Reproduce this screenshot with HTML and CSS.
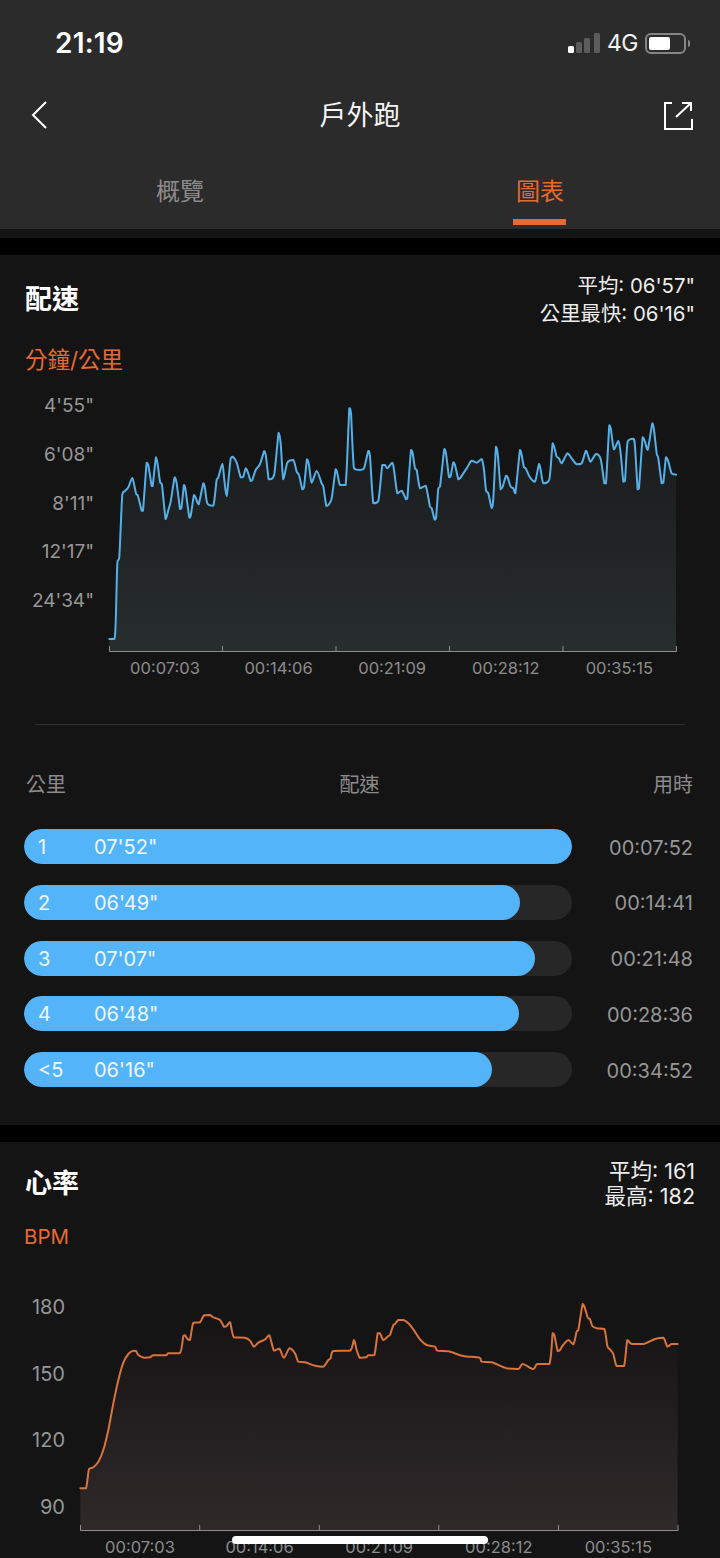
FILE: index.html
```html
<!DOCTYPE html>
<html lang="zh-Hant">
<head>
<meta charset="utf-8">
<title>戶外跑</title>
<link rel="stylesheet" href="styles.css">
</head>
<body>
<header class="header">
  <div class="status">
    <span class="clock">21:19</span>
    <div class="status-right">
      <div class="signal"><i class="sig s1"></i><i class="sig s2"></i><i class="sig s3"></i><i class="sig s4"></i></div>
      <span class="net">4G</span>
      <div class="battery"><div class="battery-fill"></div></div>
      <div class="battery-nub"></div>
    </div>
  </div>
  <nav class="nav">
    <svg class="icon" width="30" height="30" viewBox="0 0 30 30"><path class="icon-line" d="M15 2 L2 15 L15 28"/></svg>
    <h1 class="title">戶外跑</h1>
    <svg class="icon icon-end" width="30" height="30" viewBox="0 0 30 30"><path class="icon-line" d="M9 3 H2 V29 H29 V19 M13 17 L28 3 M19 3 H28 V11"/></svg>
  </nav>
  <div class="tabs">
    <div class="tab"><span class="tab-text">概覽</span></div>
    <div class="tab tab-active"><span class="tab-text">圖表</span><span class="tab-bar"></span></div>
  </div>
</header>
<div class="strip"></div>

<section class="card pace-card">
  <div class="card-head">
    <h2 class="card-title">配速</h2>
    <div class="stats"><div>平均: 06'57"</div><div>公里最快: 06'16"</div></div>
  </div>
  <div class="unit">分鐘/公里</div>
  <div class="chart">
    <div class="y-axis pace-y"><span>4'55"</span><span>6'08"</span><span>8'11"</span><span>12'17"</span><span>24'34"</span></div>
    <svg class="plot" width="570" height="261" viewBox="107 394 570 261">
      <defs><linearGradient id="paceFill" gradientUnits="userSpaceOnUse" x1="0" y1="60" x2="0" y2="785"><stop offset="0" stop-color="#18191a"/><stop offset="1" stop-color="#282d2e"/></linearGradient></defs>
      <g transform="translate(0 390) scale(.33333)">
        <polygon fill="url(#paceFill)" points="328,785 328,747 343,747 347,700 352,520 358,500 367,312 375,303 385,292 397,264 408,310 414,318 425,362 429,362 440,218 445,225 455,288 458,288 468,202 474,230 480,275 486,285 497,388 505,360 512,335 524,262 530,280 540,357 544,355 552,285 556,295 568,383 572,378 582,315 588,325 596,343 610,280 615,295 622,340 640,347 650,270 655,262 667,222 673,270 680,318 692,205 698,200 710,218 722,262 730,260 737,235 743,245 752,273 757,270 767,240 780,222 793,183 798,200 806,268 812,268 823,252 836,128 842,160 850,268 862,218 880,210 890,245 897,255 907,298 912,292 921,208 927,225 935,278 950,243 965,280 970,290 979,348 985,345 995,325 1007,238 1012,250 1020,285 1037,285 1048,55 1053,70 1062,235 1081,240 1081,785"/>
        <polyline class="line pace-line" points="328,747 343,747 347,700 352,520 358,500 367,312 375,303 385,292 397,264 408,310 414,318 425,362 429,362 440,218 445,225 455,288 458,288 468,202 474,230 480,275 486,285 497,388 505,360 512,335 524,262 530,280 540,357 544,355 552,285 556,295 568,383 572,378 582,315 588,325 596,343 610,280 615,295 622,340 640,347 650,270 655,262 667,222 673,270 680,318 692,205 698,200 710,218 722,262 730,260 737,235 743,245 752,273 757,270 767,240 780,222 793,183 798,200 806,268 812,268 823,252 836,128 842,160 850,268 862,218 880,210 890,245 897,255 907,298 912,292 921,208 927,225 935,278 950,243 965,280 970,290 979,348 985,345 995,325 1007,238 1012,250 1020,285 1037,285 1048,55 1053,70 1062,235 1080,240"/>
      </g>
      <g transform="translate(360 390) scale(.33333)">
        <polygon fill="url(#paceFill)" points="0,785 0,240 12,235 25,183 30,200 40,340 55,333 67,225 75,225 82,235 97,218 102,240 112,310 125,302 138,328 142,325 153,180 158,190 165,235 170,240 180,295 197,287 210,350 215,355 224,389 228,385 235,295 240,290 253,177 258,190 267,262 272,258 280,217 285,225 295,268 300,265 320,235 335,212 350,218 365,207 372,240 378,300 385,310 395,354 400,325 408,170 413,190 422,298 428,290 438,257 443,262 452,290 460,295 466,310 480,180 485,195 492,232 497,235 510,262 525,275 537,222 542,240 550,280 568,268 578,160 585,180 590,200 597,205 605,220 622,190 635,205 650,223 665,220 678,182 685,200 692,215 708,192 722,207 733,280 738,280 748,106 753,120 762,178 775,153 782,190 790,275 795,272 803,155 820,146 825,170 833,298 837,295 848,142 855,155 863,180 877,100 882,120 890,190 895,205 905,280 910,278 918,202 925,215 935,250 948,254 948,785"/>
        <polyline class="line pace-line" points="0,240 12,235 25,183 30,200 40,340 55,333 67,225 75,225 82,235 97,218 102,240 112,310 125,302 138,328 142,325 153,180 158,190 165,235 170,240 180,295 197,287 210,350 215,355 224,389 228,385 235,295 240,290 253,177 258,190 267,262 272,258 280,217 285,225 295,268 300,265 320,235 335,212 350,218 365,207 372,240 378,300 385,310 395,354 400,325 408,170 413,190 422,298 428,290 438,257 443,262 452,290 460,295 466,310 480,180 485,195 492,232 497,235 510,262 525,275 537,222 542,240 550,280 568,268 578,160 585,180 590,200 597,205 605,220 622,190 635,205 650,223 665,220 678,182 685,200 692,215 708,192 722,207 733,280 738,280 748,106 753,120 762,178 775,153 782,190 790,275 795,272 803,155 820,146 825,170 833,298 837,295 848,142 855,155 863,180 877,100 882,120 890,190 895,205 905,280 910,278 918,202 925,215 935,250 948,254"/>
      </g>
      <path class="axis" d="M109.5 646 V651.5 H676.5 V646 M222.5 646 V651 M336 646 V651 M449.5 646 V651 M563 646 V651"/>
    </svg>
  </div>
  <div class="x-axis pace-x"><span>00:07:03</span><span>00:14:06</span><span>00:21:09</span><span>00:28:12</span><span>00:35:15</span></div>
  <div class="divider"></div>
  <div class="table-head"><span>公里</span><span>配速</span><span>用時</span></div>
  <div class="rows">
    <div class="row"><div class="track"><div class="fill" style="width:548px"><span class="num">1</span><span class="val">07'52"</span></div></div><span class="time">00:07:52</span></div>
    <div class="row"><div class="track"><div class="fill" style="width:496px"><span class="num">2</span><span class="val">06'49"</span></div></div><span class="time">00:14:41</span></div>
    <div class="row"><div class="track"><div class="fill" style="width:511px"><span class="num">3</span><span class="val">07'07"</span></div></div><span class="time">00:21:48</span></div>
    <div class="row"><div class="track"><div class="fill" style="width:495px"><span class="num">4</span><span class="val">06'48"</span></div></div><span class="time">00:28:36</span></div>
    <div class="row"><div class="track"><div class="fill" style="width:468px"><span class="num">&lt;5</span><span class="val">06'16"</span></div></div><span class="time">00:34:52</span></div>
  </div>
</section>

<section class="card heart-card">
  <div class="card-head">
    <h2 class="card-title">心率</h2>
    <div class="stats stats-tight"><div>平均: 161</div><div>最高: 182</div></div>
  </div>
  <div class="unit unit-bpm">BPM</div>
  <div class="chart">
    <div class="y-axis heart-y"><span>180</span><span>150</span><span>120</span><span>90</span></div>
    <svg class="plot" width="602" height="239" viewBox="78 1295 602 239">
      <defs><linearGradient id="heartFill" gradientUnits="userSpaceOnUse" x1="0" y1="70" x2="0" y2="750"><stop offset="0" stop-color="#151213"/><stop offset="1" stop-color="#2f292a"/></linearGradient></defs>
      <g transform="translate(0 1280) scale(.33333)">
        <polygon fill="url(#heartFill)" points="241,750 241,625 258,625 267,567 280,562 295,545 310,510 325,450 340,370 355,300 370,248 385,222 400,212 408,213 415,225 432,233 450,232 460,226 498,226 505,220 540,219 550,168 555,166 563,178 570,180 580,128 600,127 612,106 630,105 640,112 660,120 672,140 680,138 690,126 702,172 735,173 750,182 762,200 775,188 795,178 808,166 822,212 838,206 852,233 868,205 885,220 895,245 915,247 945,257 970,260 985,240 992,235 1000,213 1050,212 1062,180 1070,210 1078,232 1081,233 1081,750"/>
        <polyline class="line heart-line" points="241,625 258,625 267,567 280,562 295,545 310,510 325,450 340,370 355,300 370,248 385,222 400,212 408,213 415,225 432,233 450,232 460,226 498,226 505,220 540,219 550,168 555,166 563,178 570,180 580,128 600,127 612,106 630,105 640,112 660,120 672,140 680,138 690,126 702,172 735,173 750,182 762,200 775,188 795,178 808,166 822,212 838,206 852,233 868,205 885,220 895,245 915,247 945,257 970,260 985,240 992,235 1000,213 1050,212 1062,180 1070,210 1078,232 1080,233"/>
      </g>
      <g transform="translate(360 1280) scale(.33333)">
        <polygon fill="url(#heartFill)" points="0,750 0,233 18,232 25,226 43,225 53,160 60,160 70,180 85,168 90,165 100,135 105,132 115,120 130,120 145,130 160,148 180,178 200,195 225,200 232,212 265,214 310,228 358,233 365,245 395,247 440,265 475,267 488,252 520,267 532,252 568,252 578,160 583,165 593,213 600,210 608,197 625,180 640,193 650,155 655,150 668,72 675,85 683,112 690,118 697,138 710,145 733,147 742,198 750,208 760,222 770,258 792,258 802,180 815,192 850,192 885,177 910,173 922,200 935,192 953,192 953,750"/>
        <polyline class="line heart-line" points="0,233 18,232 25,226 43,225 53,160 60,160 70,180 85,168 90,165 100,135 105,132 115,120 130,120 145,130 160,148 180,178 200,195 225,200 232,212 265,214 310,228 358,233 365,245 395,247 440,265 475,267 488,252 520,267 532,252 568,252 578,160 583,165 593,213 600,210 608,197 625,180 640,193 650,155 655,150 668,72 675,85 683,112 690,118 697,138 710,145 733,147 742,198 750,208 760,222 770,258 792,258 802,180 815,192 850,192 885,177 910,173 922,200 935,192 953,192"/>
      </g>
      <path class="axis" d="M80.5 1525 V1530.5 H678 V1525 M199.7 1525 V1530 M319.3 1525 V1530 M438.8 1525 V1530 M558.5 1525 V1530"/>
    </svg>
  </div>
  <div class="x-axis heart-x"><span>00:07:03</span><span>00:14:06</span><span>00:21:09</span><span>00:28:12</span><span>00:35:15</span></div>
</section>
<div class="home-indicator"></div>
<script src="charts.js"></script>
</body>
</html>
```

FILE: styles.css
```css
* { box-sizing: border-box; }
html, body { margin: 0; padding: 0; }
body {
  position: relative;
  width: 720px;
  height: 1558px;
  overflow: hidden;
  background: #000;
  color: #fff;
  font-family: Inter, "Noto Sans CJK TC", sans-serif;
}
h1, h2 { margin: 0; font-weight: 400; }

.header { height: 229px; background: #2b2b2b; }
.status { height: 86px; padding: 0 30px 0 55px; display: flex; align-items: center; justify-content: space-between; }
.clock { font-size: 28px; font-weight: 600; letter-spacing: .2px; }
.status-right { display: flex; align-items: center; }
.signal { display: flex; align-items: flex-end; gap: 2px; height: 20px; margin-right: 7px; }
.sig { display: block; width: 6px; border-radius: 1.5px; background: #5c5c5c; }
.s1 { height: 7px; background: #fff; }
.s2 { height: 11px; }
.s3 { height: 15px; }
.s4 { height: 20px; margin-left: 2px; }
.net { font-size: 23px; width: 30px; letter-spacing: -.6px; margin-right: 8px; color: #f2f2f2; }
.battery { width: 41px; height: 21px; padding: 2px; border: 2px solid #858585; border-radius: 6px; }
.battery-fill { width: 21px; height: 13px; background: #fff; border-radius: 2px; }
.battery-nub { width: 2px; height: 7px; margin-left: 2px; background: #858585; border-radius: 0 2px 2px 0; }

.nav { height: 58px; padding: 0 27px 0 31px; display: grid; grid-template-columns: 1fr auto 1fr; align-items: center; }
.icon { display: block; }
.icon-end { justify-self: end; }
.icon-line { fill: none; stroke: #fff; stroke-width: 2; }
.title { font-size: 27px; line-height: 36px; padding: 2px 4px 0 0; color: #f4f4f4; }

.tabs { display: flex; height: 85px; }
.tab { flex: 1; padding-top: 31px; display: flex; flex-direction: column; align-items: center; color: #8b8b8b; }
.tab-text { font-size: 24px; line-height: 34px; }
.tab-active { color: #e56a33; }
.tab-bar { width: 53px; height: 6px; margin: 10px 2px 0 0; background: #e56a33; }

.strip { height: 9px; margin-bottom: 17px; background: #141414; }

.card { background: #141414; }
.pace-card { height: 870px; padding-top: 17px; margin-bottom: 17px; }
.heart-card { height: 416px; padding-top: 17px; }
.card-head { display: flex; justify-content: space-between; align-items: center; padding: 0 25px; }
.card-title { font-size: 27px; font-weight: 700; padding-bottom: 6px; }
.stats { text-align: right; font-size: 20.4px; line-height: 28px; color: #ededed; }
.stats-tight { font-size: 21.5px; line-height: 25px; }
.unit { margin: 17px 0 0 25px; font-size: 22.5px; line-height: 30px; color: #e56a33; }
.unit-bpm { margin: 16px 0 0 24px; font-size: 20.5px; line-height: 24px; }

.chart { display: flex; margin-top: 19px; }
.heart-card .chart { margin-top: 46px; }
.plot { display: block; margin-left: 13px; }
.line { fill: none; stroke-width: 6; stroke-linejoin: round; stroke-linecap: round; }
.pace-line { stroke: #56b0e8; }
.heart-line { stroke: #d9733c; }
.axis { fill: none; stroke: #8e8e8e; stroke-width: 1; }

.y-axis { display: flex; flex-direction: column; align-items: flex-end; color: #979797; line-height: 24px; font-size: 20px; }
.pace-y { width: 94px; gap: 24.75px; font-size: 19px; }
.heart-y { width: 65px; gap: 42.67px; }
.x-axis { display: flex; margin-top: 3px; font-size: 16.5px; line-height: 20px; color: #8d8d8d; }
.x-axis span { text-align: center; }
.pace-x { padding-left: 108.2px; }
.pace-x span { width: 113.6px; }
.heart-x { padding-left: 80.2px; }
.heart-x span { width: 119.6px; }

.divider { height: 1px; margin: 46px 35px 0; background: #2f2f2f; }
.table-head { display: flex; justify-content: space-between; margin-top: 48px; padding: 0 27px 0 26px; font-size: 20px; line-height: 24px; color: #8a8a8a; }
.rows { display: flex; flex-direction: column; gap: 20.75px; margin-top: 32px; padding: 0 27px 0 24px; }
.row { display: flex; align-items: center; justify-content: space-between; }
.track { width: 548px; height: 35px; border-radius: 17.5px; background: #272727; overflow: hidden; }
.fill { display: flex; align-items: center; height: 35px; padding: 1px 0 0 14px; border-radius: 17.5px; background: #54b4fa; color: #edf7fe; font-size: 20px; }
.num { width: 56px; }
.time { font-size: 20px; color: #969696; padding-top: 2px; }

.home-indicator { position: absolute; left: 232px; top: 1536px; width: 256px; height: 8px; border-radius: 4px; background: #fff; }
```

FILE: charts.js
```js
// Turns each chart's sampled polyline into a smooth curve that never overshoots its samples.
var SVG_NS = "http://www.w3.org/2000/svg";
function clamp(v, a, b) {
  return Math.min(Math.max(v, Math.min(a, b)), Math.max(a, b));
}
document.querySelectorAll("polyline.line").forEach(function (line) {
  var p = line.getAttribute("points").trim().split(/\s+/).map(function (pair) {
    return pair.split(",").map(Number);
  });
  var tension = 0.14;
  var d = "M" + p[0][0] + " " + p[0][1];
  for (var i = 0; i < p.length - 1; i++) {
    var a = p[Math.max(i - 1, 0)], b = p[i], c = p[i + 1], e = p[Math.min(i + 2, p.length - 1)];
    d += " C" + (b[0] + (c[0] - a[0]) * tension) + " " + clamp(b[1] + (c[1] - a[1]) * tension, b[1], c[1]) +
         " " + (c[0] - (e[0] - b[0]) * tension) + " " + clamp(c[1] - (e[1] - b[1]) * tension, b[1], c[1]) +
         " " + c[0] + " " + c[1];
  }
  var path = document.createElementNS(SVG_NS, "path");
  path.setAttribute("class", line.getAttribute("class"));
  path.setAttribute("d", d);
  line.replaceWith(path);
});
```
